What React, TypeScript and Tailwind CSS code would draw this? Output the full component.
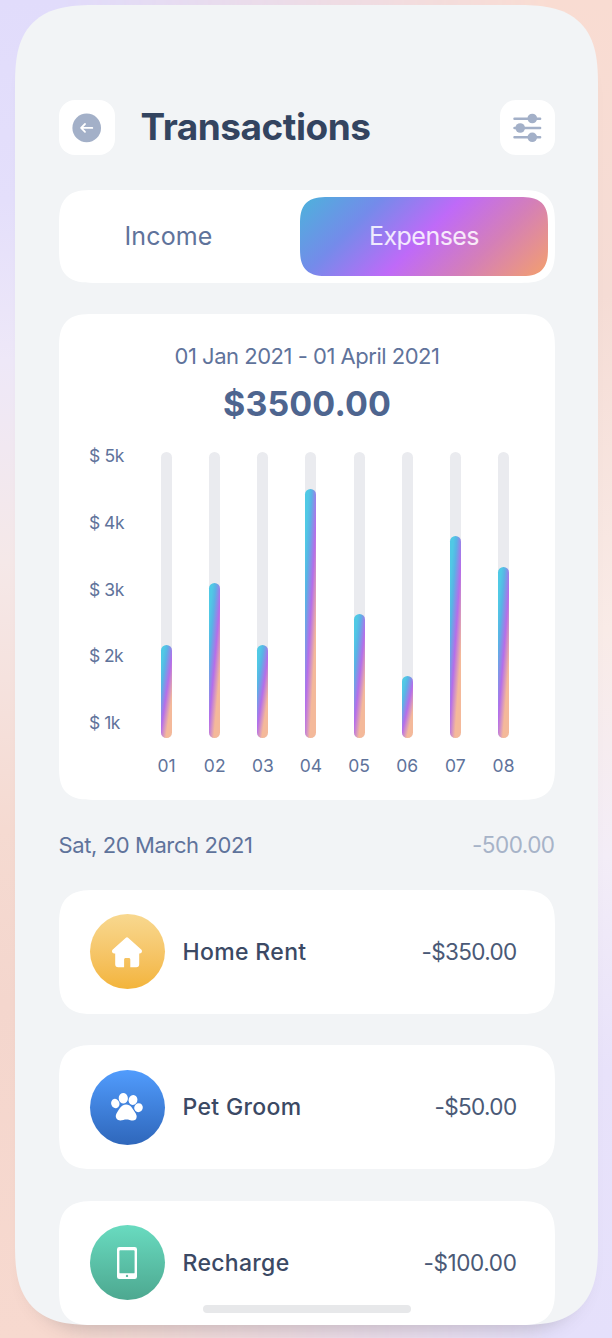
import React, { useLayoutEffect, useRef, useState } from "react";

const bars = [
  { label: "01", height: 93.5 },
  { label: "02", height: 155.5 },
  { label: "03", height: 93.5 },
  { label: "04", height: 249 },
  { label: "05", height: 124.5 },
  { label: "06", height: 62.5 },
  { label: "07", height: 202 },
  { label: "08", height: 171 },
];

/** The colour bands run nearly corner to corner, so their angle depends on the bar's height. */
function barGradient(height: number) {
  const angle = 90 + (Math.atan(11 / (0.78 * height)) * 180) / Math.PI;
  return `linear-gradient(${angle}deg, #50c9e5 14%, #5ab2e5 28%, #b56eea 51%, #f4b99a 75%)`;
}

type FitProps = { width: number; className?: string; children: string };

/** Spreads a line of text over a fixed width by adjusting its letter spacing. */
function Fit({ width, className = "", children }: FitProps) {
  const ref = useRef<HTMLSpanElement>(null);
  const [spacing, setSpacing] = useState(0);
  useLayoutEffect(() => {
    if (ref.current) {
      setSpacing((width - ref.current.getBoundingClientRect().width) / children.length);
    }
  }, []);
  return (
    <span ref={ref} className={"inline-block whitespace-nowrap " + className} style={{ letterSpacing: spacing }}>
      {children}
    </span>
  );
}

function HomeIcon() {
  return (
    <svg width="32" height="32" viewBox="0 0 32 32" fill="white">
      <path d="M14.6 1.9a2 2 0 0 1 2.8 0L30.2 13.6c1.5 1.5.7 3.8-1.4 3.8h-.6v10.8a3 3 0 0 1-3 3h-5.900V23.600c0-1-.6-1.600-1.600-1.600h-3c-1 0-1.600.6-1.600 1.600v7.600H7.200a3 3 0 0 1-3-3V17.400h-1c-2.100 0-2.900-2.300-1.400-3.800Z" />
    </svg>
  );
}

function PawIcon() {
  return (
    <svg width="34" height="32" viewBox="0 0 34 32" fill="white">
      <ellipse cx="5.3" cy="12.5" rx="4.1" ry="4.800" transform="rotate(-18 5.3 12.5)" />
      <ellipse cx="13.3" cy="7.300" rx="4.600" ry="5.300" transform="rotate(-4 13.3 7.3)" />
      <ellipse cx="23" cy="9" rx="4.400" ry="5" transform="rotate(16 23 9)" />
      <ellipse cx="28.500" cy="16.700" rx="4.200" ry="4.500" transform="rotate(25 28.5 16.7)" />
      <path d="M16 13.500c5 0 6.500 4.300 8.600 7.300 1.800 2.500 2.700 4.500 1.700 6.800-1.300 2.800-4.400 1.900-6.800 1.300-2-.5-4.100-.5-6.100 0-2.200.6-5.100 1.100-6.800-1.100-1.700-2.400-.6-5 .9-7.100C9.800 17.500 11.500 13.500 16 13.500Z" />
    </svg>
  );
}

function PhoneIcon() {
  return (
    <svg width="20" height="32" viewBox="0 0 20 32">
      <path
        fill="white"
        fillRule="evenodd"
        d="M2.300 0h15.400A2.300 2.300 0 0 1 20 2.300v27.400a2.300 2.300 0 0 1-2.300 2.300H2.300A2.300 2.300 0 0 1 0 29.700V2.300A2.300 2.300 0 0 1 2.300 0Zm1 3.300a.9.900 0 0 0-.9.900v21.200c0 .5.400.9.900.9h13.400c.5 0 .9-.4.900-.9V4.200a.9.900 0 0 0-.9-.9Z"
      />
      <circle cx="10" cy="28.900" r="1.200" fill="#63b9a2" />
    </svg>
  );
}

type RowProps = {
  name: string;
  nameWidth: number;
  amount: string;
  amountWidth: number;
  circle: string;
  icon: React.ReactNode;
};

function Row({ name, nameWidth, amount, amountWidth, circle, icon }: RowProps) {
  return (
    <div className="flex h-[124px] shrink-0 items-center rounded-[26px] bg-white pr-[38.5px] pl-[30.5px] supports-[corner-shape:squircle]:rounded-[36px] supports-[corner-shape:squircle]:[corner-shape:superellipse(1.5)]">
      <div className={"flex size-[75px] items-center justify-center rounded-full bg-linear-to-b " + circle}>{icon}</div>
      <Fit width={nameWidth} className="ml-[18px] text-[23px] font-[550] text-[#3b4964]">
        {name}
      </Fit>
      <Fit width={amountWidth} className="ml-auto text-[22.5px] text-[#4a5976]">
        {amount}
      </Fit>
    </div>
  );
}

export default function App() {
  return (
    <div className="h-[1338px] w-[612px] overflow-hidden bg-[linear-gradient(180deg,#e1dcfb_0%,#e4dffb_15%,#eee8f8_27%,#f5e8e8_42%,#f5dad1_62%,#f4d6cd_75%,#f7d9cf_100%)]">
      <div className="h-full bg-[linear-gradient(180deg,#f9dcd2_0%,#f5dcd5_22%,#f9ebe7_47%,#f3edf7_64%,#e8e2fa_80%,#e5e0fb_100%)] mask-[linear-gradient(90deg,transparent_10%,black_90%)]" />
      <div className="relative -mt-[1338px] h-[1338px] pt-[5px] pl-[15px]">
        <div className="h-[1320px] w-[583px] rounded-[72px] shadow-[0_18px_18px_-14px_rgba(90,85,90,0.28)]">
          <main className="relative flex h-[1320px] w-[583px] flex-col overflow-hidden rounded-[64px] bg-[#f2f4f6] pr-[43px] pl-[44px] font-['Inter',sans-serif] text-[#5f739b] supports-[corner-shape:squircle]:rounded-[82px] supports-[corner-shape:squircle]:[corner-shape:superellipse(1.5)]">
            <header className="mt-[94.5px] flex h-[56px] shrink-0 items-center">
              <button className="flex size-[55.5px] items-center justify-center rounded-[16px] bg-white">
                <svg width="30" height="30" viewBox="0 0 30 30">
                  <circle cx="14.700" cy="14.900" r="14.300" fill="#a3b0c8" />
                  <path d="M20.300 14.900H9.500M13 11l-3.900 3.900 3.900 3.900" fill="none" stroke="white" strokeWidth="1.800" strokeLinecap="round" strokeLinejoin="round" />
                </svg>
              </button>
              <h1 className="-mt-[2px] ml-[26px] text-[37px] leading-[45px] font-bold text-[#334460]">
                <Fit width={230}>Transactions</Fit>
              </h1>
              <button className="ml-auto flex size-[55.5px] items-center justify-center rounded-[16px] bg-white">
                <svg width="30" height="30" viewBox="0 0 30 30" fill="#a3b0c8" stroke="#a3b0c8" strokeWidth="2.500" strokeLinecap="round">
                  <path d="M2.500 5.700h25.600M2.500 15h25.600M2.500 24.300h25.600" />
                  <g stroke="none">
                    <circle cx="20.300" cy="5.500" r="4.800" />
                    <circle cx="8.200" cy="15" r="4.800" />
                    <circle cx="20.300" cy="24.300" r="4.800" />
                  </g>
                </svg>
              </button>
            </header>

            <nav className="mt-[34.5px] flex h-[92.5px] shrink-0 rounded-[26px] bg-white p-[7px] text-[25px] supports-[corner-shape:squircle]:rounded-[34px] supports-[corner-shape:squircle]:[corner-shape:superellipse(1.5)]">
              <div className="flex flex-1 items-center justify-center pr-[29px]">
                <Fit width={88}>Income</Fit>
              </div>
              <div className="flex w-[248px] items-center justify-center rounded-[20px] bg-[linear-gradient(135deg,#4cb3db,#748bea_25%,#bf6af8_50%,#d47fb8_73%,#f4a06c)] text-white/85 supports-[corner-shape:squircle]:rounded-[28px] supports-[corner-shape:squircle]:[corner-shape:superellipse(1.5)]">
                <Fit width={110}>Expenses</Fit>
              </div>
            </nav>

            <section className="mt-[31.5px] flex h-[485.5px] shrink-0 flex-col items-center rounded-[26px] bg-white pt-[28px] supports-[corner-shape:squircle]:rounded-[34px] supports-[corner-shape:squircle]:[corner-shape:superellipse(1.5)]">
              <Fit width={265} className="h-[28px] text-[22px] leading-[28px]">
                01 Jan 2021 - 01 April 2021
              </Fit>
              <Fit width={168} className="mt-[12px] h-[44px] text-[34px] leading-[44px] font-bold text-[#4e658f]">
                $3500.00
              </Fit>
              <div className="mt-[26px] flex w-full pl-[30px] text-[17.5px]">
                <div className="-mt-[8px] flex w-[61px] flex-col items-start gap-[42.8px] leading-[24px]">
                  <Fit width={35}>$ 5k</Fit>
                  <Fit width={35}>$ 4k</Fit>
                  <Fit width={35}>$ 3k</Fit>
                  <Fit width={34}>$ 2k</Fit>
                  <Fit width={31}>$ 1k</Fit>
                </div>
                <div className="flex">
                  {bars.map((bar) => (
                    <div key={bar.label} className="flex w-[48.15px] flex-col items-center pr-[15px]">
                      <div className="flex h-[286px] w-[11px] items-end rounded-full bg-[#eaebef]">
                        <div
                          className="w-full rounded-full"
                          style={{ height: bar.height, backgroundImage: barGradient(bar.height) }}
                        />
                      </div>
                      <span className="mt-[16px] w-[30px] text-center leading-[24px]">{bar.label}</span>
                    </div>
                  ))}
                </div>
              </div>
            </section>

            <div className="mt-[30px] flex h-[30px] shrink-0 items-center justify-between text-[22.5px]">
              <Fit width={194} className="-ml-[0.5px] pt-[1px] text-[22px]">
                Sat, 20 March 2021
              </Fit>
              <Fit width={83} className="pt-[1px] pr-[0.5px] text-[#a7b3c8]">
                -500.00
              </Fit>
            </div>

            <div className="mt-[30.3px] flex flex-col gap-[31.5px]">
              <Row name="Home Rent" nameWidth={124} amount="-$350.00" amountWidth={95} circle="from-[#f8d88f] to-[#f3b43a]" icon={<HomeIcon />} />
              <Row name="Pet Groom" nameWidth={119} amount="-$50.00" amountWidth={82} circle="from-[#519cfd] to-[#2f67bb]" icon={<PawIcon />} />
              <Row name="Recharge" nameWidth={107} amount="-$100.00" amountWidth={93} circle="from-[#69dbc0] to-[#4da890]" icon={<PhoneIcon />} />
            </div>
            <div className="absolute top-[1299.5px] left-[188px] h-[8px] w-[208px] rounded-full bg-[#e7e8ea]" />
          </main>
        </div>
      </div>
    </div>
  );
}
